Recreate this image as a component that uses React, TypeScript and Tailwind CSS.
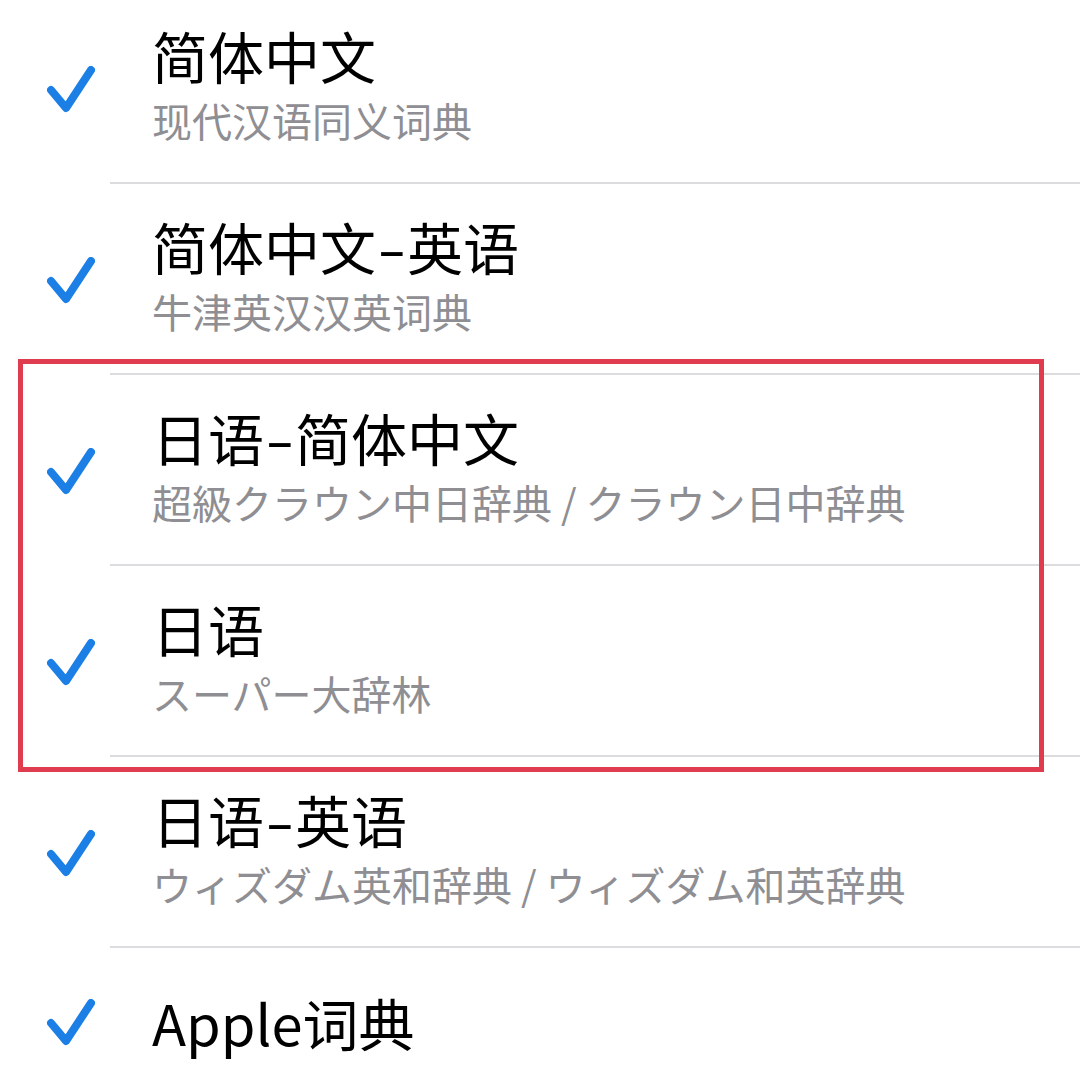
import React from "react";

const CJK = { fontFamily: '"Noto Sans CJK SC", "Noto Sans CJK JP", sans-serif' };
const JP = { fontFamily: '"Noto Sans CJK JP", "Noto Sans CJK SC", sans-serif' };

function Check() {
  return (
    <svg width="48" height="48" viewBox="0 0 48 48" className="block">
      <path
        d="M4 24 L19 42 L44 4"
        fill="none"
        stroke="#1b7fe6"
        strokeWidth="8"
        strokeLinecap="round"
        strokeLinejoin="round"
      />
    </svg>
  );
}

type Item = { title: string; sub?: string; jp?: boolean };

const items: Item[] = [
  { title: "简体中文", sub: "现代汉语同义词典" },
  { title: "简体中文-英语", sub: "牛津英汉汉英词典" },
  { title: "日语-简体中文", sub: "超級クラウン中日辞典 / クラウン日中辞典", jp: true },
  { title: "日语", sub: "スーパー大辞林", jp: true },
  { title: "日语-英语", sub: "ウィズダム英和辞典 / ウィズダム和英辞典", jp: true },
];

function Title({ text }: { text: string }) {
  const parts = text.split("-");
  return (
    <div className="text-[56px] leading-[66px] text-black" style={CJK}>
      {parts.map((p, i) => (
        <React.Fragment key={i}>
          {i > 0 && (
            <span className="inline-block w-[31px] text-center">
              <span className="inline-block scale-x-[1.5]">-</span>
            </span>
          )}
          {p}
        </React.Fragment>
      ))}
    </div>
  );
}

function Row({ item }: { item: Item }) {
  return (
    <div className="flex h-[191px]">
      <div className="w-[110px] shrink-0 flex items-center pl-[47px] pt-[3px]">
        <Check />
      </div>
      <div className="flex-1 border-b-2 border-[#dcdcdf] pl-[42px] pt-[29px]">
        <Title text={item.title} />
        <div
          className="text-[40px] leading-[64px] text-[#8e8e93]"
          style={item.jp ? JP : CJK}
        >
          {item.sub}
        </div>
      </div>
    </div>
  );
}

export default function App() {
  return (
    <div className="relative w-[1080px] h-[1080px] overflow-hidden bg-white">
      <div className="mt-[-7px] flex flex-col">
        {items.map((it) => (
          <Row key={it.title} item={it} />
        ))}
        <div className="flex h-[150px]">
          <div className="w-[110px] shrink-0 flex items-center pl-[47px]">
            <Check />
          </div>
          <div className="flex-1 flex items-center pl-[42px] pb-[2px]">
            <div className="text-[56px] leading-[66px] text-black" style={CJK}>
              Apple词典
            </div>
          </div>
        </div>
      </div>
      <div className="absolute left-[18px] top-[359px] w-[1026px] h-[413px] border-[5px] border-[#e03c50] pointer-events-none" />
    </div>
  );
}
